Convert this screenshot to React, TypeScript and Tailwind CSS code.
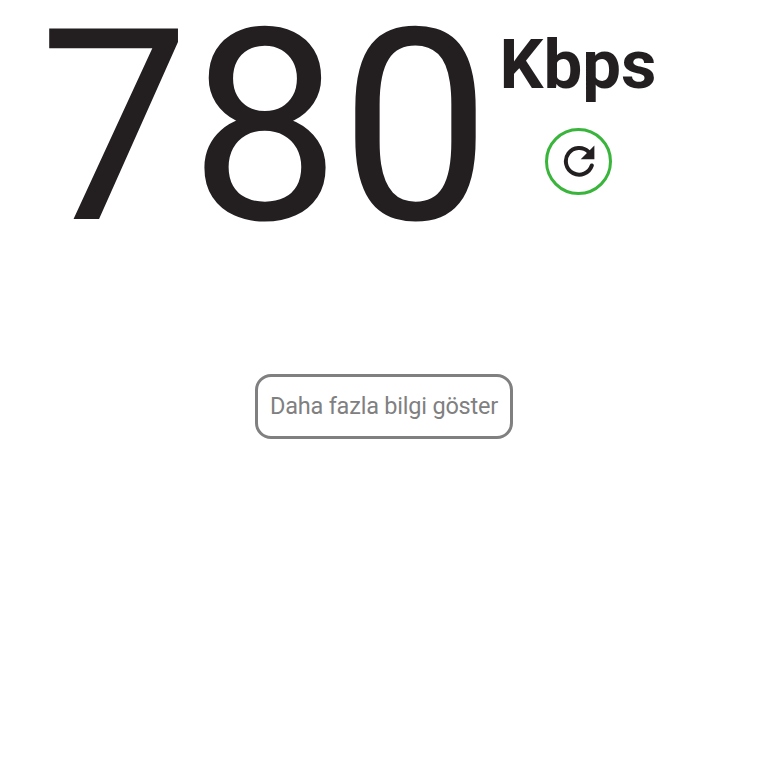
export default function App() {
  return (
    <main className="min-h-screen bg-white font-['Roboto',sans-serif] text-[#231f20]">
      <section className="flex h-[374px] items-start pl-[39px]">
        <div className="w-[452px] whitespace-nowrap pt-[3px] text-[268px] leading-[248px]">780</div>

        <div className="flex w-[174px] flex-col items-center pt-[28px]">
          <div className="text-[69px] font-bold leading-[73px]">Kbps</div>
          <button
            aria-label="Yenile"
            className="mt-[26.5px] ml-px flex size-[67.5px] items-center justify-center rounded-full border-[3px] border-[#39b53b]"
          >
            <svg viewBox="0 0 32 32" className="size-[32px]" fill="none">
              <path d="M28.8 20.5A13.3 13.3 0 1 1 25.6 6.9" stroke="currentColor" strokeWidth="4" strokeLinecap="round" />
              <path d="M31.4 .6v13.7H17.7z" fill="currentColor" />
            </svg>
          </button>
        </div>
      </section>

      <div className="flex justify-center">
        <button className="h-[64.5px] w-[258px] whitespace-nowrap rounded-[16px] border-[3px] border-[#808080] text-[23.5px] tracking-[-0.21px] text-[#808080]">
          Daha fazla bilgi göster
        </button>
      </div>
    </main>
  );
}
